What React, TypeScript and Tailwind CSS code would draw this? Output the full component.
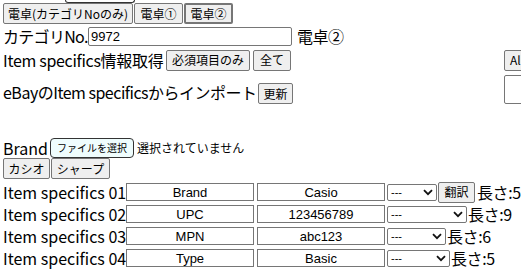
import React from "react";

const jp = { fontFamily: '"Noto Sans CJK JP", "Noto Sans", sans-serif' };
const ar = { fontFamily: '"Liberation Sans", Arial, "Noto Sans CJK JP", sans-serif' };

function Btn({ children, className = "" }: { children: React.ReactNode; className?: string }) {
  return (
    <button
      className={
        "inline-flex shrink-0 items-center justify-center whitespace-nowrap h-[21px] px-[5px] border border-[#767676] bg-[#efefef] rounded-[2px] text-[12px] leading-none text-black " +
        className
      }
      style={jp}
    >
      {children}
    </button>
  );
}

function Chevron() {
  return (
    <svg width="10" height="7" viewBox="0 0 10 7" className="shrink-0">
      <path d="M1 1.2 L5 5.2 L9 1.2" fill="none" stroke="#111" strokeWidth="1.8" />
    </svg>
  );
}

function Select({ w }: { w: string }) {
  return (
    <div
      className={
        "flex shrink-0 items-center justify-between h-[17px] border border-[#767676] rounded-[2px] bg-white pl-[3px] pr-[3px] " + w
      }
    >
      <span className="text-[11px] leading-none" style={ar}>---</span>
      <Chevron />
    </div>
  );
}

function Field({ value }: { value: string }) {
  return (
    <div
      className="flex shrink-0 items-center justify-center w-[128px] h-[18px] border border-[#767676] bg-white text-[13px] leading-none"
      style={ar}
    >
      {value}
    </div>
  );
}

const rows = [
  { n: "01", a: "Brand", b: "Casio", sel: "w-[50px]", btn: true, len: 5 },
  { n: "02", a: "UPC", b: "123456789", sel: "w-[80px]", btn: false, len: 9 },
  { n: "03", a: "MPN", b: "abc123", sel: "w-[59px]", btn: false, len: 6 },
  { n: "04", a: "Type", b: "Basic", sel: "w-[63px]", btn: false, len: 5 },
];

const T = "shrink-0 whitespace-nowrap leading-none";

export default function App() {
  return (
    <div className="w-[521px] h-[272px] overflow-hidden bg-white text-black text-[16px]" style={jp}>
      <div className="h-[3px] pl-[65px]">
        <div className="w-[70px] h-[3px] border border-t-0 border-[#333] rounded-b-[4px] bg-white" />
      </div>
      <div className="flex pl-[3px] gap-[1px]">
        <Btn className="w-[130px]">電卓(カテゴリNoのみ)</Btn>
        <Btn className="w-[49px]">電卓①</Btn>
        <Btn className="w-[49px] border-2 border-[#1a5cc8]">電卓②</Btn>
      </div>
      <div className="flex items-center h-[24px] pl-[3px]">
        <span className={T + " w-[85px] tracking-[-0.7px]"}>カテゴリNo.</span>
        <div className="shrink-0 w-[204px] h-[19px] border border-[#767676] rounded-[2px] bg-white flex items-center pl-[2px] text-[13px] leading-none" style={ar}>
          9972
        </div>
        <span className={T + " ml-[5px] tracking-[-0.5px]"}>電卓②</span>
      </div>
      <div className="flex items-center h-[24px] pl-[3px]">
        <span className={T + " w-[163px] tracking-[-0.3px]"}>Item specifics情報取得</span>
        <Btn className="w-[84px]">必須項目のみ</Btn>
        <Btn className="w-[38px] ml-[3px]">全て</Btn>
        <Btn className="ml-[213px] w-[40px] justify-start">All</Btn>
      </div>
      <div className="flex items-end h-[32px] pl-[3px]">
        <span className={T + " w-[255px] mb-[4px] tracking-[-0.5px]"}>eBayのItem specificsからインポート</span>
        <Btn className="w-[35px]">更新</Btn>
        <div className="shrink-0 ml-[211px] w-[40px] h-[29px] border border-[#767676] rounded-[2px] bg-white" />
      </div>
      <div className="h-[33px]" />
      <div className="flex items-center h-[21px] pl-[3px]">
        <span className={T + " w-[47px]"}>Brand</span>
        <div className="flex shrink-0 items-center justify-center w-[84px] h-[20px] border border-[#333] rounded-[4px] bg-[#effdfd] text-[10px] leading-none whitespace-nowrap">
          ファイルを選択
        </div>
        <span className={T + " ml-[3px] text-[12px]"}>選択されていません</span>
      </div>
      <div className="flex pl-[3px] gap-[1px]">
        <Btn className="w-[47px]">カシオ</Btn>
        <Btn className="w-[59px]">シャープ</Btn>
      </div>
      <div className="mt-[2px]">
        {rows.map((r) => (
          <div key={r.n} className="flex items-center h-[22px] pl-[3px]">
            <span className={T + " w-[123px]"}>Item specifics {r.n}</span>
            <Field value={r.a} />
            <div className="w-[3px] shrink-0" />
            <Field value={r.b} />
            <div className="w-[2px] shrink-0" />
            <Select w={r.sel} />
            {r.btn && <Btn className="ml-[1px] w-[37px]">翻訳</Btn>}
            <span className={T + " tracking-[-0.4px]" + (r.btn ? " ml-[2px]" : " ml-[1px]")}>長さ:{r.len}</span>
          </div>
        ))}
      </div>
    </div>
  );
}
